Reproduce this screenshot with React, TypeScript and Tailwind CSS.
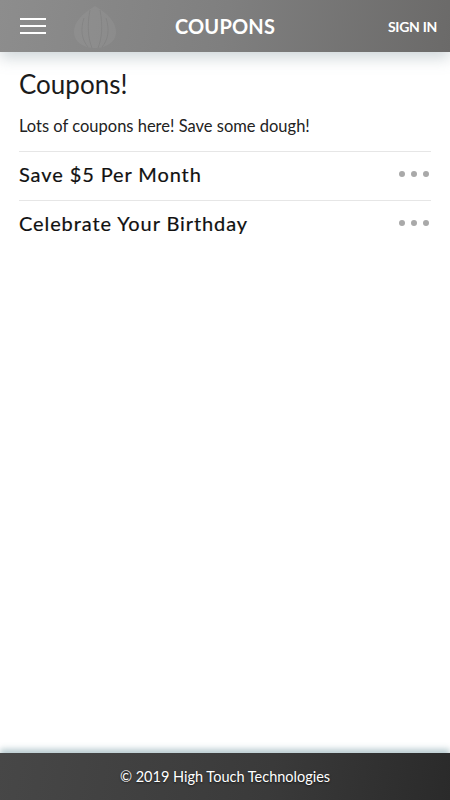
import React from "react";

function Dots() {
  return (
    <div className="flex items-center gap-[6px] pr-[2px]">
      <span className="block w-[6px] h-[6px] rounded-full bg-[#a9a9a9]" />
      <span className="block w-[6px] h-[6px] rounded-full bg-[#a9a9a9]" />
      <span className="block w-[6px] h-[6px] rounded-full bg-[#a9a9a9]" />
    </div>
  );
}

export default function App() {
  const font = { fontFamily: "Lato, 'Open Sans', sans-serif" };
  return (
    <div className="w-[450px] h-[800px] flex flex-col bg-white overflow-hidden" style={font}>
      <header className="relative h-[52px] shrink-0 flex items-center justify-between pl-[20px] pr-[13px] bg-[linear-gradient(100deg,#8d8d8d_0%,#7f7f7f_50%,#6b6a69_100%)] shadow-[0_6px_14px_rgba(120,140,150,0.35)] z-10">
        <svg className="absolute left-[70px] top-0 opacity-[0.05]" width="50" height="52" viewBox="0 0 50 52">
          <path d="M25 0 V6 C12 14 4 22 4 32 C4 42 14 48 25 48 C36 48 46 42 46 32 C46 22 38 14 25 6 Z" fill="#fff" />
          <path d="M14 18 C10 30 12 40 18 47 M20 10 C17 26 18 38 22 48 M30 10 C33 26 32 38 28 48 M36 18 C40 30 38 40 32 47" fill="none" stroke="#555" strokeWidth="1" />
        </svg>
        <div className="flex flex-col gap-[5px] w-[26px]">
          <span className="block h-[2px] bg-white" />
          <span className="block h-[2px] bg-white" />
          <span className="block h-[2px] bg-white" />
        </div>
        <div className="absolute left-0 right-0 text-center text-white text-[20px] font-bold tracking-[0.2px] pointer-events-none">
          COUPONS
        </div>
        <div className="text-white text-[14px] font-bold tracking-[-0.3px]">SIGN IN</div>
      </header>
      <main className="flex-1 px-[19px] pt-[16px]">
        <h1 className="text-[26px] leading-[32px] text-[#1b1b1b]">Coupons!</h1>
        <p className="mt-[15px] text-[16.5px] leading-[22px] text-[#222]">Lots of coupons here! Save some dough!</p>
        <div className="mt-[14px] border-t border-[#e6e6e6]" />
        <div className="h-[48px] pb-[4px] flex items-center justify-between">
          <span className="text-[20px] tracking-[0.9px] text-[#111] [-webkit-text-stroke:0.2px_#111]">Save $5 Per Month</span>
          <Dots />
        </div>
        <div className="border-t border-[#e6e6e6]" />
        <div className="h-[48px] pb-[4px] flex items-center justify-between">
          <span className="text-[20px] tracking-[0.9px] text-[#111] [-webkit-text-stroke:0.2px_#111]">Celebrate Your Birthday</span>
          <Dots />
        </div>
      </main>
      <footer className="h-[47px] shrink-0 flex items-center justify-center bg-[linear-gradient(100deg,#474747_0%,#3a3a3a_60%,#2a2a2a_100%)] shadow-[0_-4px_6px_rgba(100,140,150,0.45)]">
        <span className="text-white text-[14.5px] [text-shadow:0_1px_2px_rgba(0,0,0,0.6)]">© 2019 High Touch Technologies</span>
      </footer>
    </div>
  );
}
